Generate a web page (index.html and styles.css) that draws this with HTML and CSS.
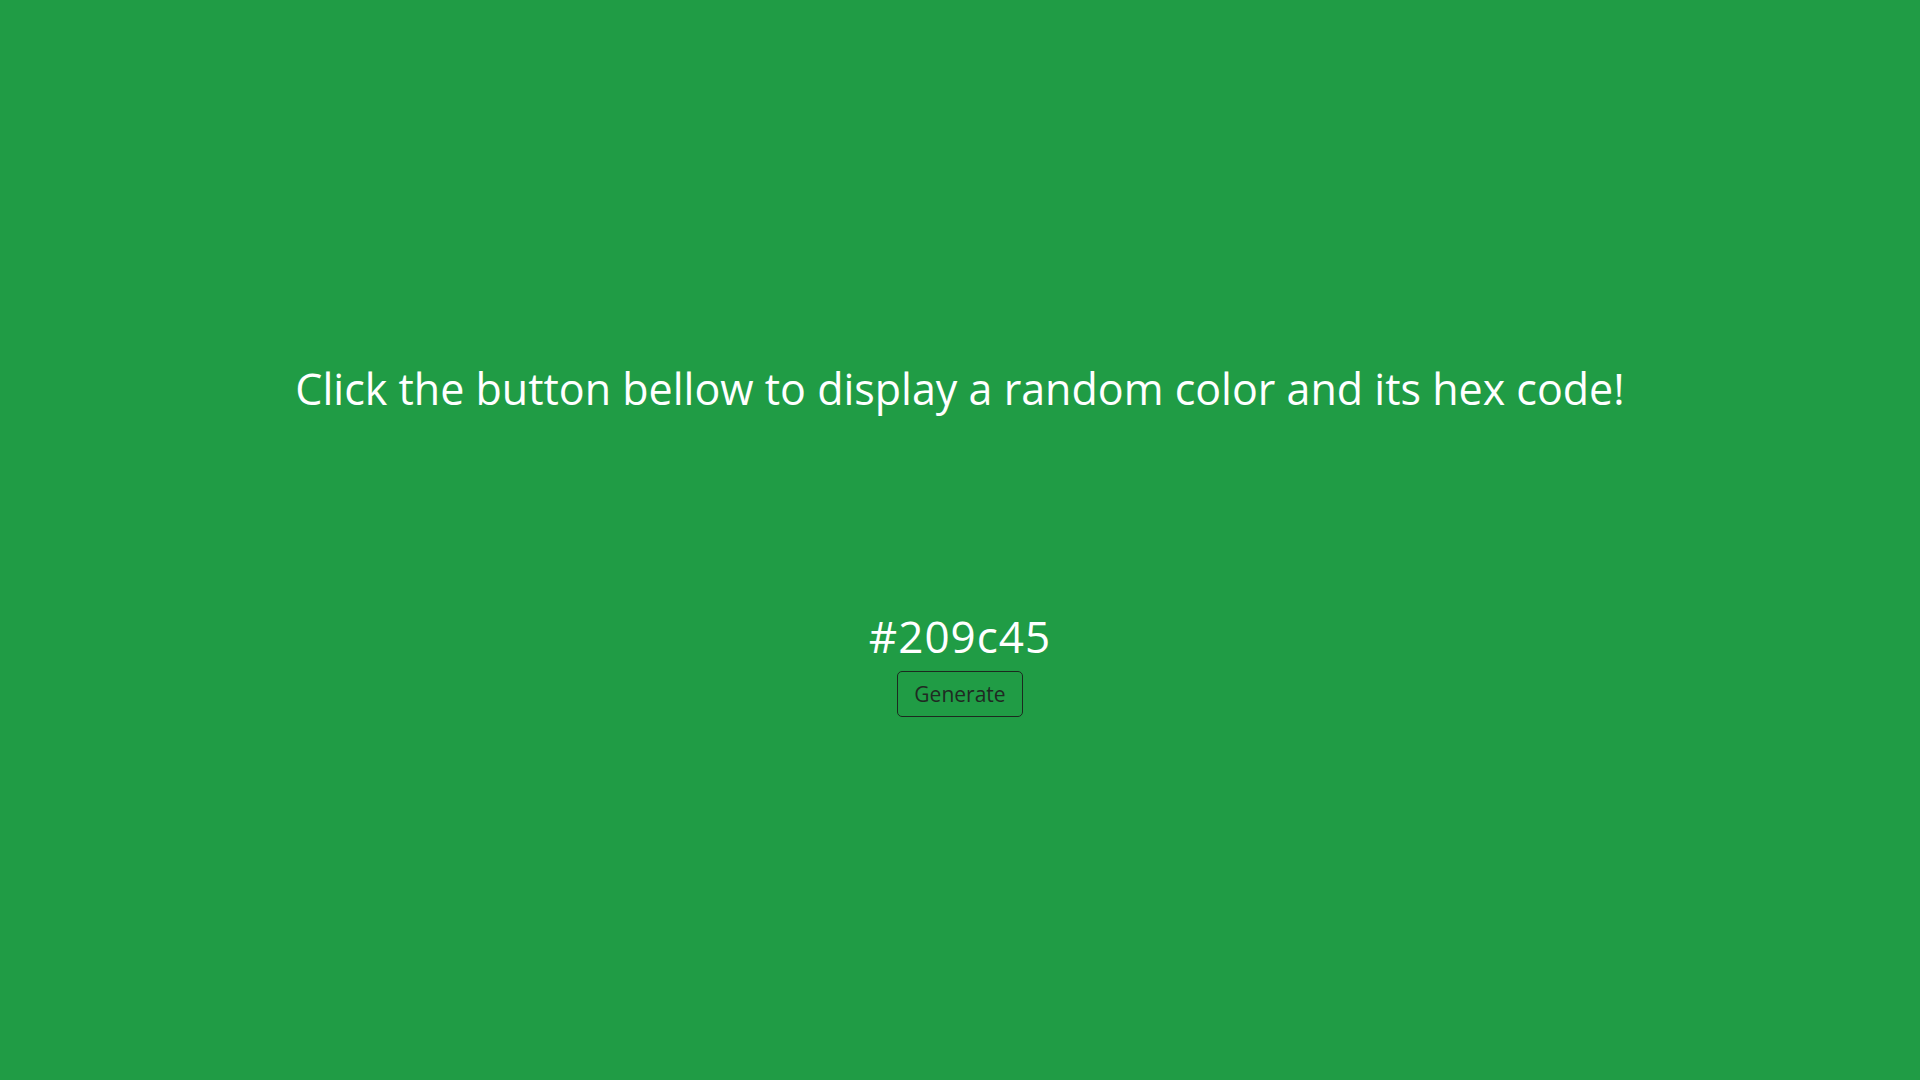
FILE: index.html
```html
<!DOCTYPE html>
<html lang="en">
<head>
<meta charset="utf-8">
<title>Random Color</title>
<link rel="stylesheet" href="styles.css">
</head>
<body>
<main class="page">
  <h1 class="title">Click the button bellow to display a random color and its hex code!</h1>
  <div class="result">
    <p class="hex">#209c45</p>
    <button class="btn" type="button">Generate</button>
  </div>
</main>
</body>
</html>
```
FILE: styles.css
```css
html, body {
  margin: 0;
  padding: 0;
  height: 100%;
}
body {
  background: #209c45;
  font-family: "Open Sans", "Noto Sans", sans-serif;
  color: #ffffff;
}
.page {
  height: 100vh;
  display: flex;
  flex-direction: column;
  align-items: center;
  justify-content: center;
}
.title {
  margin: 0 0 196px;
  font-size: 43px;
  font-weight: 400;
  line-height: 1.2;
  letter-spacing: 0;
  text-align: center;
}
.result {
  display: flex;
  flex-direction: column;
  align-items: center;
}
.hex {
  margin: 0 0 8px;
  font-size: 44px;
  letter-spacing: 1px;
  line-height: 1.2;
}
.btn {
  font-family: "Open Sans", "Noto Sans", sans-serif;
  font-size: 21px;
  color: #1f2a22;
  background: transparent;
  border: 1px solid #1b2a1f;
  border-radius: 5px;
  padding: 0 16px;
  height: 46px;
  width: 126px;
}
```
